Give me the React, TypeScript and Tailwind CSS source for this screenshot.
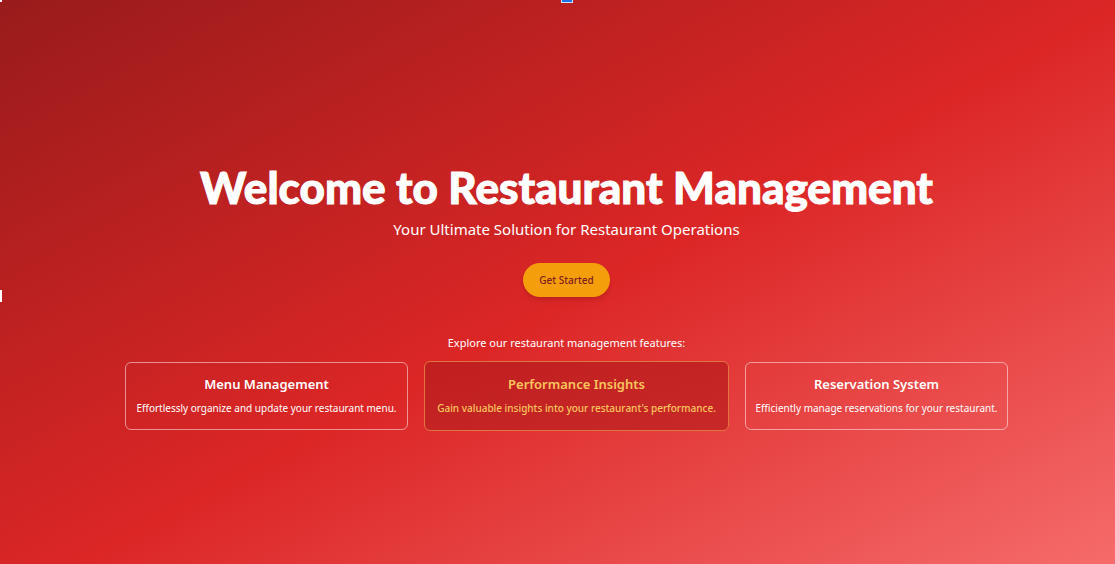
type Feature = { title: string; text: string; highlighted?: boolean; width: string };

const features: Feature[] = [
  { title: "Menu Management", text: "Effortlessly organize and update your restaurant menu.", width: "w-[283px]" },
  {
    title: "Performance Insights",
    text: "Gain valuable insights into your restaurant's performance.",
    highlighted: true,
    width: "w-[305px]",
  },
  { title: "Reservation System", text: "Efficiently manage reservations for your restaurant.", width: "w-[263px]" },
];

function FeatureCard({ title, text, highlighted, width }: Feature) {
  const look = highlighted
    ? "h-[70px] border-[#e2743f] bg-linear-to-br from-[#c01e1f] to-[#c92829] text-[#f9c65d]"
    : "h-[68px] border-white/50 text-white";
  return (
    <article className={`${width} ${look} flex flex-col items-center justify-center gap-2 rounded-md border`}>
      <h2 className="text-[13px] leading-4 font-semibold">{title}</h2>
      <p className={highlighted ? "whitespace-nowrap text-[10px] leading-4 font-medium" : "whitespace-nowrap text-[10px] leading-4"}>
        {text}
      </p>
    </article>
  );
}

export default function App() {
  return (
    <main className="relative flex min-h-screen flex-col items-center justify-center overflow-hidden bg-[linear-gradient(to_bottom_right,#991b1b,#dc2626,#f87171)] bg-[length:calc(100%+18px)_calc(100%+40px)] pt-[30px] pl-[18px] text-center font-['Noto_Sans',sans-serif] text-white">
      <span className="absolute top-0 left-0 h-[2px] w-[2px] bg-white" />
      <span className="absolute top-0 left-[561px] h-[3px] w-3 border border-t-0 border-white/80 bg-[#1a73e8]" />
      <span className="absolute top-[290px] left-0 h-3 w-[2px] border border-l-0 border-white/70 bg-white" />
      <h1 className="text-[44px] leading-12 font-black font-['Lato',sans-serif] [-webkit-text-stroke:1px_white]">
        Welcome to Restaurant Management
      </h1>
      <p className="mt-1.5 text-[15px] leading-6">Your Ultimate Solution for Restaurant Operations</p>
      <button
        type="button"
        className="mt-[22px] h-[34px] rounded-full bg-[#f59e0b] px-4 text-[10px] font-medium text-[#7f1d1d] shadow-md"
      >
        Get Started
      </button>
      <p className="mt-9 text-[11px] leading-5">Explore our restaurant management features:</p>
      <section className="mt-2 flex items-center justify-center gap-4">
        {features.map((feature) => (
          <FeatureCard key={feature.title} {...feature} />
        ))}
      </section>
    </main>
  );
}
